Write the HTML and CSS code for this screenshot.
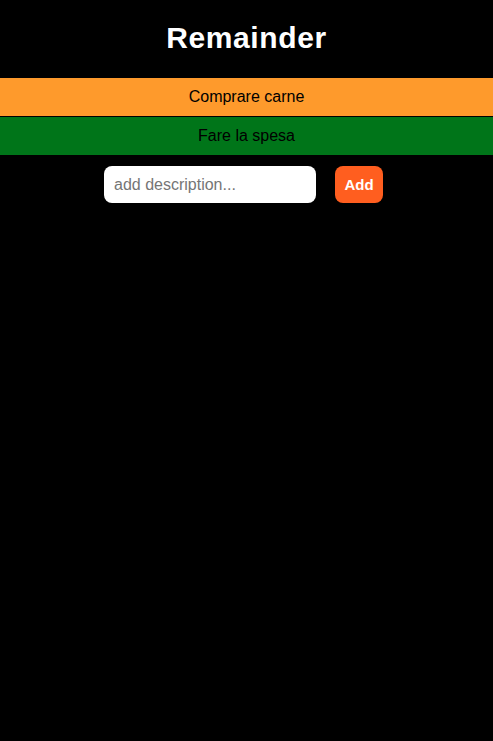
FILE: index.html
```html
<!DOCTYPE html>
<html lang="it">
<head>
<meta charset="utf-8">
<title>Remainder</title>
<link rel="stylesheet" href="styles.css">
</head>
<body>
  <h1 class="title">Remainder</h1>
  <ul class="list">
    <li class="item item-orange">Comprare carne</li>
    <li class="item item-green">Fare la spesa</li>
  </ul>
  <form class="add-form">
    <input class="add-input" type="text" placeholder="add description...">
    <button class="add-btn" type="button">Add</button>
  </form>
</body>
</html>
```
FILE: styles.css
```css
html, body {
  margin: 0;
  padding: 0;
  background: #000;
  font-family: "Liberation Sans", Arial, Helvetica, sans-serif;
  height: 100%;
}

.title {
  margin: 22px 0 24px;
  color: #fff;
  font-size: 30px;
  font-weight: bold;
  letter-spacing: 0.6px;
  text-align: center;
  line-height: 32px;
}

.list {
  list-style: none;
  margin: 0;
  padding: 0;
  display: flex;
  flex-direction: column;
  gap: 1px;
}

.item {
  height: 38px;
  display: flex;
  align-items: center;
  justify-content: center;
  font-size: 16px;
  color: #000;
}

.item-orange { background: #fe9a2c; }
.item-green { background: #007519; }

.add-form {
  margin: 11px 0 0;
  display: flex;
  justify-content: center;
  gap: 19px;
  padding-right: 6px;
}

.add-input {
  box-sizing: border-box;
  width: 212px;
  height: 37px;
  border: none;
  border-radius: 8px;
  padding: 0 10px;
  font-family: "Liberation Sans", Arial, sans-serif;
  font-size: 16px;
  background: #fff;
  color: #000;
  outline: none;
}

.add-input::placeholder {
  color: #757575;
}

.add-btn {
  box-sizing: border-box;
  width: 48px;
  height: 37px;
  border: none;
  border-radius: 8px;
  background: #ff5e1f;
  color: #fff;
  font-family: "Liberation Sans", Arial, sans-serif;
  font-size: 15px;
  font-weight: bold;
  padding: 0;
}
```
